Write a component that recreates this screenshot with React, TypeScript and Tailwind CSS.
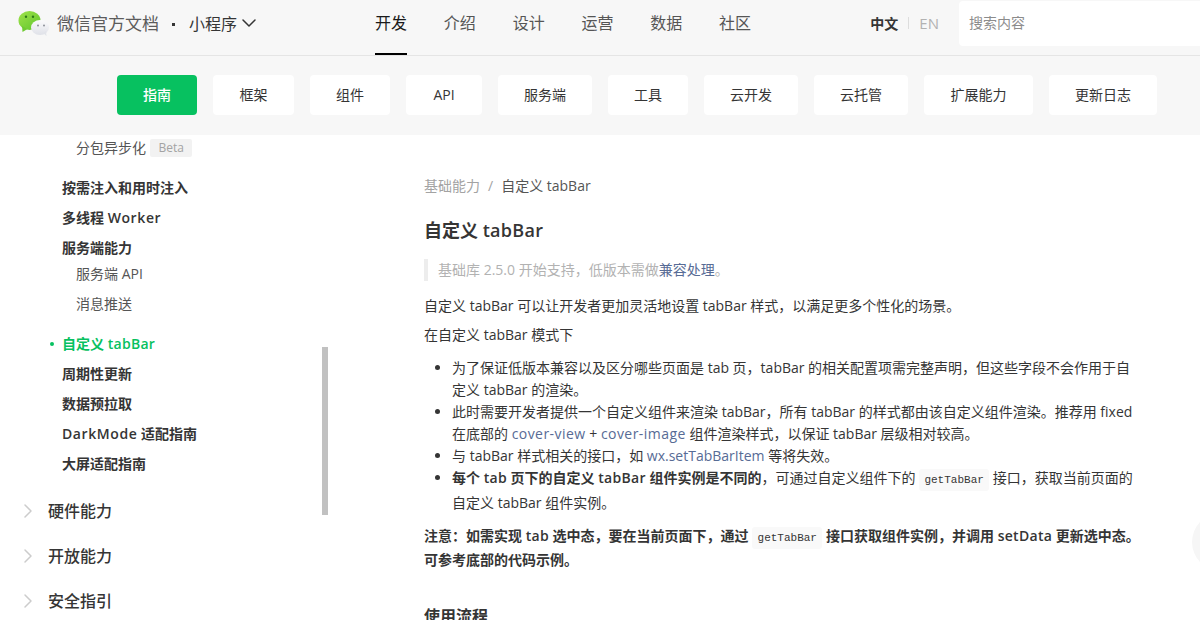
import type { ReactNode } from "react";
import { ChevronDown, ChevronRight } from "lucide-react";

const navItems = ["开发", "介绍", "设计", "运营", "数据", "社区"];
const tabs = [
    { label: "指南", width: "w-[80px]" },
    { label: "框架", width: "w-[81px]" },
    { label: "组件", width: "w-[80px]" },
    { label: "API", width: "w-[76px]" },
    { label: "服务端", width: "w-[94px]" },
    { label: "工具", width: "w-[80px]" },
    { label: "云开发", width: "w-[94px]" },
    { label: "云托管", width: "w-[94px]" },
    { label: "扩展能力", width: "w-[109px]" },
    { label: "更新日志", width: "w-[108px]" },
];

function WechatLogo() {
    return (
        <svg width="32" height="28" viewBox="0 0 32 28" className="mt-[1px]">
            <defs>
                <linearGradient id="wxGreen" x1="0" y1="0" x2="1" y2="1">
                    <stop offset="0" stopColor="#9fe24a" />
                    <stop offset="1" stopColor="#5fc52c" />
                </linearGradient>
                <linearGradient id="wxGray" x1="0" y1="0" x2="0" y2="1">
                    <stop offset="0" stopColor="#fbfbfc" />
                    <stop offset="1" stopColor="#dfe1e8" />
                </linearGradient>
            </defs>
            <ellipse cx="12.500" cy="9.500" rx="11" ry="9.500" fill="url(#wxGreen)" />
            <path d="M5 15l.5 6 5-3z" fill="#6fcb32" />
            <circle cx="9" cy="5.800" r="1.200" fill="#2f7a18" />
            <circle cx="16" cy="5.800" r="1.200" fill="#2f7a18" />
            <ellipse cx="23" cy="16.500" rx="9" ry="7.500" fill="url(#wxGray)" />
            <path d="M26 22l3.500 3-.5-5z" fill="#e2e4ea" />
            <circle cx="21" cy="14.500" r="1" fill="#8d9099" />
            <circle cx="27" cy="14.500" r="1" fill="#8d9099" />
        </svg>
    );
}

function SideGroup({ children, active }: { children: ReactNode; active?: boolean }) {
    return (
        <div className={`relative flex h-[30px] items-center whitespace-pre pb-[2px] pl-[62px] text-[14px] font-semibold ${active ? "text-[#07c160]" : "text-[#353535]"}`}>
            {active && <span className="absolute left-[50px] top-[13px] h-[4px] w-[4px] rounded-full bg-[#07c160]" />}
            {children}
        </div>
    );
}

function SideTop({ label }: { label: string }) {
    return (
        <div className="flex h-[45px] items-center pl-[16px] text-[16px] font-medium text-[#353535]">
            <ChevronRight size={24} strokeWidth={1.5} className="mr-[8px] text-[#cccccc]" />
            {label}
        </div>
    );
}

function Code({ children }: { children: string }) {
    return (
        <code className="mx-[3.5px] rounded-[3px] bg-[#f9f9f9] px-[5.5px] py-[5px] font-['Liberation_Mono','DejaVu_Sans_Mono',monospace] text-[11px] font-normal leading-none text-[#353535]">
            {children}
        </code>
    );
}

function Link({ children, wide }: { children: string; wide?: boolean }) {
    return <span className={`text-[#576b95] ${wide ? "tracking-[0.45px]" : ""}`}>{children}</span>;
}

function Wide({ children }: { children: string }) {
    return <span className="tracking-[0.3px]">{children}</span>;
}

export default function App() {
    return (
        <div className="relative h-[620px] w-[1200px] overflow-hidden bg-white font-['Open_Sans','Noto_Sans_CJK_SC',sans-serif] text-[#353535]">
            <header className="flex h-[56px] items-center border-b border-[#e5e5e5] bg-[#f7f7f7]">
                <div className="flex w-[375px] items-center pb-[7px] pl-[17px]">
                    <WechatLogo />
                    <span className="ml-[8px] text-[17px] text-[#5c5c5c]">微信官方文档</span>
                    <span className="ml-[13px] mr-[14px] h-[3px] w-[3px] bg-[#353535]" />
                    <span className="text-[16px] text-[#353535]">小程序</span>
                    <ChevronDown size={24} strokeWidth={1.5} className="-mt-[2px]" />
                </div>
                <nav className="flex h-full gap-[36.8px] text-[16px]">
                    {navItems.map((item, i) => (
                        <div key={item} className={`flex h-full items-center border-b-2 pb-[7px] ${i === 0 ? "border-black text-[#1a1a1a]" : "border-transparent text-[#555555]"}`}>
                            {item}
                        </div>
                    ))}
                </nav>
                <div className="ml-auto flex items-center">
                    <span className="mb-[9px] text-[14px] font-bold text-[#353535]">中文</span>
                    <span className="mx-[10px] mb-[9px] h-[12px] w-px bg-[#dddddd]" />
                    <span className="mb-[9px] text-[15px] text-[#b2b2b2]">EN</span>
                    <div className="mb-[9px] ml-[20px] flex h-[45px] w-[241px] items-center rounded-l-[4px] bg-white pb-[2px] pl-[10px] text-[14px] text-[#8c8c8c]">
                        搜索内容
                    </div>
                </div>
            </header>

            <div className="flex h-[79px] items-start gap-[16px] bg-[#f7f7f7] pl-[117px] pt-[19px]">
                {tabs.map((tab, i) => (
                    <div key={tab.label} className={`flex h-[40px] items-center justify-center rounded-[4px] pb-[2px] text-[14px] ${tab.width} ${i === 0 ? "bg-[#07c160] font-medium text-white" : "bg-white text-[#353535]"}`}>
                        {tab.label}
                    </div>
                ))}
            </div>

            <div className="flex h-[485px]">
                <aside className="relative w-[322px] shrink-0 overflow-hidden">
                    <div className="flex h-[26px] items-center pl-[76px] text-[14px] text-[#555555]">
                        <span className="-mt-[2px]">分包异步化</span>
                        <span className="ml-[4px] rounded-[2px] bg-[#f2f2f2] px-[8.5px] text-[12px] leading-[18px] text-[#a3a3a3]">Beta</span>
                    </div>
                    <div className="mt-[12px]">
                        <SideGroup>按需注入和用时注入</SideGroup>
                        <SideGroup>多线程 <span className="tracking-[0.6px]">Worker</span></SideGroup>
                        <SideGroup>服务端能力</SideGroup>
                    </div>
                    <div className="-mt-[4px] pl-[76px] text-[14px] text-[#555555]">
                        <div className="flex h-[30px] items-center pb-[2px]">服务端 API</div>
                        <div className="flex h-[30px] items-center pb-[2px]">消息推送</div>
                    </div>
                    <div className="mt-[10px]">
                        <SideGroup active>自定义 <Wide>tabBar</Wide></SideGroup>
                        <SideGroup>周期性更新</SideGroup>
                        <SideGroup>数据预拉取</SideGroup>
                        <SideGroup><span className="tracking-[0.6px]">DarkMode</span> 适配指南</SideGroup>
                        <SideGroup>大屏适配指南</SideGroup>
                    </div>
                    <div className="mt-[9px]">
                        <SideTop label="硬件能力" />
                        <SideTop label="开放能力" />
                        <SideTop label="安全指引" />
                    </div>
                </aside>
                <div className="w-[6px] shrink-0">
                    <div className="mt-[212px] h-[168px] w-[6px] bg-[#c1c1c1]" />
                </div>

                <main className="ml-[96px] w-[730px] shrink-0 text-[14px] leading-[22px]">
                    <div className="mt-[40px] flex h-[22px] items-center">
                        <span className="text-[#a3a3a3]">基础能力</span>
                        <span className="mx-[8px] text-[#a3a3a3]">/</span>
                        <span className="text-[#555555]">自定义 tabBar</span>
                    </div>
                    <h1 className="mt-[20px] text-[18px] font-semibold leading-[26px]">自定义 <Wide>tabBar</Wide></h1>
                    <blockquote className="mt-[16px] border-l-4 border-[#ededed] pl-[10px] text-[#b2b2b2]">
                        基础库 2.5.0 开始支持，低版本需做<Link>兼容处理</Link>。
                    </blockquote>
                    <p className="mt-[14px]">自定义 tabBar 可以让开发者更加灵活地设置 tabBar 样式，以满足更多个性化的场景。</p>
                    <p className="mt-[7px]">在自定义 tabBar 模式下</p>
                    <ul className="mt-[11px] list-disc pl-[28px]">
                        <li>为了保证低版本兼容以及区分哪些页面是 tab 页，tabBar 的相关配置项需完整声明，但这些字段不会作用于自<br />定义 tabBar 的渲染。</li>
                        <li>此时需要开发者提供一个自定义组件来渲染 tabBar，所有 tabBar 的样式都由该自定义组件渲染。推荐用 fixed<br />在底部的 <Link wide>cover-view</Link> + <Link wide>cover-image</Link> 组件渲染样式，以保证 tabBar 层级相对较高。</li>
                        <li>与 tabBar 样式相关的接口，如 <Link>wx.setTabBarItem</Link> 等将失效。</li>
                        <li className="-mt-[2.5px] leading-[25px]"><strong className="font-semibold">每个 <Wide>tab</Wide> 页下的自定义 <Wide>tabBar</Wide> 组件实例是不同的</strong>，可通过自定义组件下的<Code>getTabBar</Code>接口，获取当前页面的<br />自定义 tabBar 组件实例。</li>
                    </ul>
                    <p className="mt-[9.5px] font-semibold leading-[24px]">注意：如需实现 <Wide>tab</Wide> 选中态，要在当前页面下，通过<Code>getTabBar</Code>接口获取组件实例，并调用 <Wide>setData</Wide> 更新选中态。<br />可参考底部的代码示例。</p>
                    <h2 className="mt-[32px] text-[16px] font-semibold leading-[24px]">使用流程</h2>
                </main>
            </div>

            <div className="absolute left-[1192px] top-[513px] h-[58px] w-[58px] rounded-full bg-[#f6f6f6]" />
        </div>
    );
}
